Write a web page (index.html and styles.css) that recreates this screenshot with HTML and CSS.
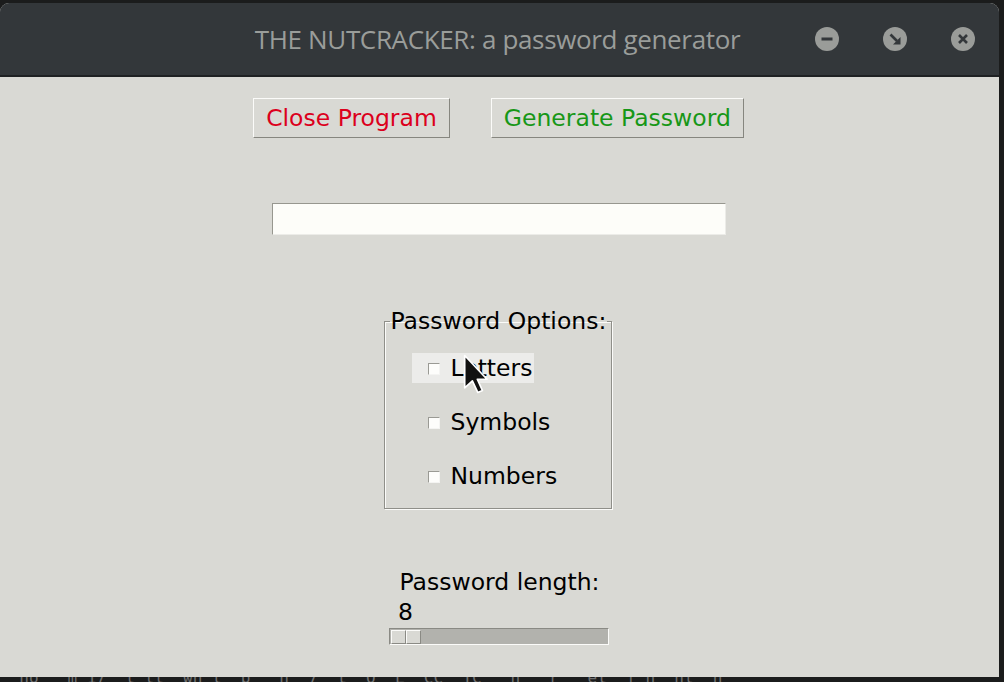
FILE: index.html
```html
<!DOCTYPE html>
<html>
<head>
<meta charset="utf-8">
<link rel="stylesheet" href="styles.css">
</head>
<body>
<div class="screen">
  <div class="column">
    <div class="window">
      <div class="titlebar">
        <div></div>
        <div class="title">THE NUTCRACKER: a password generator</div>
        <div class="controls">
          <span class="ctl">
            <svg width="24" height="24" viewBox="0 0 24 24"><circle cx="12" cy="12" r="12" fill="#9a9c99"/><rect x="6.5" y="10.5" width="11" height="3" fill="#33373a"/></svg>
          </span>
          <span class="ctl">
            <svg width="24" height="24" viewBox="0 0 24 24"><circle cx="12" cy="12" r="12" fill="#9a9c99"/><path d="M7.5 7.5 L14 14" stroke="#33373a" stroke-width="2.6"/><path d="M17.5 10 L17.5 17.5 L10 17.5 Z" fill="#33373a"/></svg>
          </span>
          <span class="ctl">
            <svg width="24" height="24" viewBox="0 0 24 24"><circle cx="12" cy="12" r="12" fill="#9a9c99"/><path d="M8 8 L16 16 M16 8 L8 16" stroke="#33373a" stroke-width="2.6"/></svg>
          </span>
        </div>
      </div>
      <div class="content">
        <div class="actions">
          <button class="btn btn-close">Close Program</button>
          <button class="btn btn-gen">Generate Password</button>
        </div>
        <div class="entry"></div>
        <fieldset class="options">
          <legend class="options-label">Password Options:</legend>
          <div class="check hover"><span class="box"></span><span class="check-text">Letters</span></div>
          <div class="check"><span class="box"></span><span class="check-text">Symbols</span></div>
          <div class="check"><span class="box"></span><span class="check-text">Numbers</span></div>
        </fieldset>
        <div class="length-label">Password length:</div>
        <div class="scale">
          <div class="scale-value">8</div>
          <div class="trough"><span class="slider"></span><span class="slider"></span></div>
        </div>
        <svg class="cursor" width="28" height="40" viewBox="0 0 18 26"><path d="M1 1 L1 22 L6 17.5 L9.5 25 L12.5 23.7 L9.2 16.4 L15.5 16.4 Z" fill="#111" stroke="#fff" stroke-width="1.1" stroke-linejoin="round"/></svg>
      </div>
    </div>
    <div class="term-bottom"><span>  ho   m 17  l ll  wh l  b   h  7  t  O  L  CC  TC   h   r   el  f h  hl  h</span></div>
  </div>
  <div class="term-right"></div>
</div>
</body>
</html>
```

FILE: styles.css
```css
html, body {
  margin: 0;
  padding: 0;
  background: #1b1c1c;
}
.screen {
  display: flex;
  width: 1004px;
  height: 682px;
  overflow: hidden;
}
.column {
  width: 999px;
  display: flex;
  flex-direction: column;
  padding-top: 3px;
}
.window {
  height: 674px;
  display: flex;
  flex-direction: column;
  border-radius: 9px 9px 0 0;
  overflow: hidden;
  background: #d9d9d4;
}
.titlebar {
  height: 72px;
  background: #33373a;
  border-bottom: 2px solid #1f2123;
  display: grid;
  grid-template-columns: 1fr auto 1fr;
  align-items: center;
}
.title {
  font-family: "Open Sans", sans-serif;
  font-size: 26px;
  color: #9a9d9a;
  letter-spacing: -0.35px;
  margin-right: 4px;
}
.controls {
  display: flex;
  justify-content: flex-end;
  gap: 44px;
  padding-right: 24px;
}
.ctl {
  display: block;
  width: 24px;
  height: 24px;
}
.ctl svg { display: block; }
.content {
  position: relative;
  flex: 1;
  display: flex;
  flex-direction: column;
  align-items: center;
  font-family: "DejaVu Sans", sans-serif;
  font-size: 23.5px;
  line-height: 27px;
  color: #000;
}
.actions {
  display: flex;
  gap: 41px;
  margin-top: 21px;
  margin-right: 2px;
}
.btn {
  font-family: "DejaVu Sans", sans-serif;
  font-size: 23.5px;
  line-height: 26px;
  height: 40px;
  padding: 0 12px;
  background: #d9d9d4;
  border: 1px solid;
  border-color: #fbfbf9 #86867f #86867f #fbfbf9;
  margin: 0;
}
.btn-close { color: #dc001c; }
.btn-gen { color: #179717; }
.entry {
  margin-top: 65px;
  margin-right: 1px;
  width: 452px;
  height: 30px;
  background: #fdfdf9;
  border: 1px solid;
  border-color: #97978f #ecece8 #ecece8 #97978f;
}
.options {
  margin: 73px 4px 0 0;
  width: 226px;
  padding: 19px 0 17px 0;
  border: 1px solid #8f8f89;
  box-shadow: inset 1px 1px 0 #fbfbf9, 1px 1px 0 #fbfbf9;
  box-sizing: content-box;
  min-width: 0;
}
.options-label {
  margin-left: 5px;
  padding: 0 1px;
  line-height: 26px;
}
.check {
  display: flex;
  align-items: center;
  width: fit-content;
  height: 30px;
  margin-left: 27px;
  padding: 0 2px 0 16px;
  margin-bottom: 24px;
}
.check:last-child { margin-bottom: 0; }
.check.hover { background: #ececea; }
.box {
  display: block;
  width: 10px;
  height: 10px;
  background: #fdfdfb;
  border: 1px solid;
  border-color: #9a9a94 #f4f4f2 #f4f4f2 #9a9a94;
  margin-right: 11px;
  margin-top: 1px;
}
.length-label {
  margin-top: 60px;
  line-height: 27px;
}
.scale {
  margin-top: 3px;
  margin-right: 1px;
  width: 220px;
}
.scale-value {
  padding-left: 9px;
  line-height: 27px;
}
.trough {
  margin-top: 2px;
  background: #b2b2ad;
  border: 1px solid;
  border-color: #8a8a84 #fbfbf9 #fbfbf9 #8a8a84;
  display: flex;
  padding: 1px 0 0 1px;
  box-sizing: content-box;
  height: 14px;
}
.slider {
  display: block;
  width: 13px;
  height: 12px;
  background: #d9d9d4;
  border: 1px solid;
  border-color: #fbfbf9 #8a8a84 #8a8a84 #fbfbf9;
}
.cursor {
  position: absolute;
  left: 463px;
  top: 277px;
}
.term-bottom {
  height: 5px;
  overflow: hidden;
  font-family: "DejaVu Sans Mono", monospace;
  font-size: 16px;
  color: #6f6f6f;
  white-space: pre;
}
.term-bottom span {
  display: block;
  margin-top: -9px;
  line-height: 20px;
}
.term-right {
  width: 5px;
  background: #1b1c1c;
}
```
